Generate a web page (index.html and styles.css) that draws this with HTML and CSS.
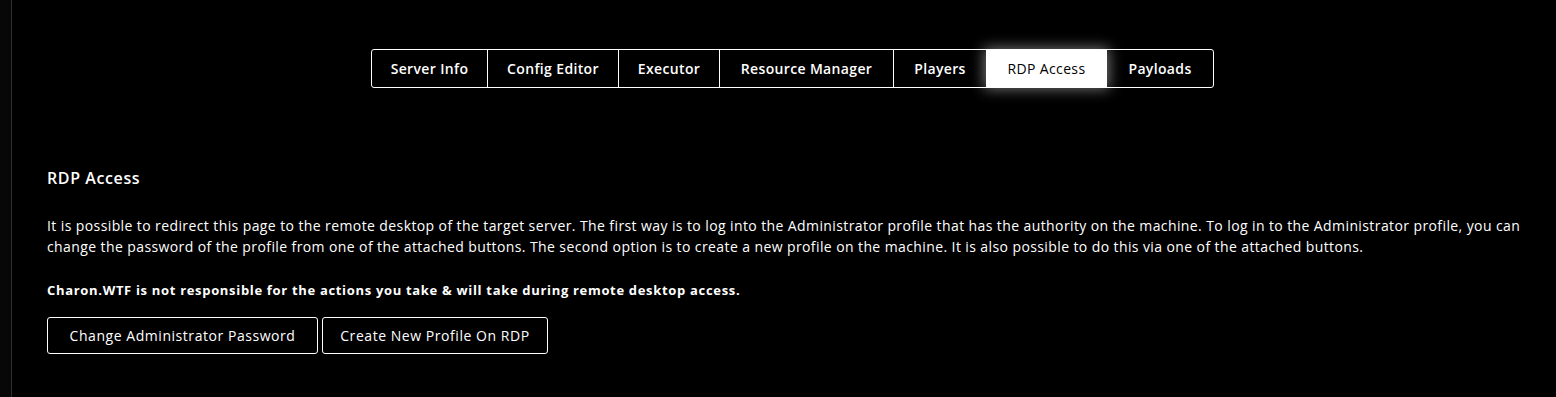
FILE: index.html
```html
<!DOCTYPE html>
<html lang="en">
<head>
<meta charset="utf-8">
<title>RDP Access</title>
<link rel="stylesheet" href="styles.css">
</head>
<body>
<div class="layout">
  <aside class="rail"></aside>
  <main class="main">
    <nav class="tabs">
      <a class="tab t-info">Server Info</a>
      <a class="tab t-config">Config Editor</a>
      <a class="tab t-exec">Executor</a>
      <a class="tab t-res">Resource Manager</a>
      <a class="tab t-players">Players</a>
      <a class="tab t-rdp active">RDP Access</a>
      <a class="tab t-payloads">Payloads</a>
    </nav>
    <section class="panel">
      <h2 class="title">RDP Access</h2>
      <p class="desc">It is possible to redirect this page to the remote desktop of the target server. The first way is to log into the Administrator profile that has the authority on the machine. To log in to the Administrator profile, you can change the password of the profile from one of the attached buttons. The second option is to create a new profile on the machine. It is also possible to do this via one of the attached buttons.</p>
      <p class="warn">Charon.WTF is not responsible for the actions you take &amp; will take during remote desktop access.</p>
      <div class="actions">
        <button class="btn btn-admin">Change Administrator Password</button>
        <button class="btn btn-profile">Create New Profile On RDP</button>
      </div>
    </section>
  </main>
</div>
</body>
</html>
```
FILE: styles.css
```css
* { box-sizing: border-box; }
html, body { margin: 0; padding: 0; background: #000; }
body {
  font-family: "Open Sans", "Liberation Sans", sans-serif;
  color: #fff;
  height: 397px;
  overflow: hidden;
}
.layout { display: flex; height: 397px; }
.rail {
  width: 12px;
  flex: none;
  background: #070707;
  border-right: 1px solid #2e2e2e;
}
.main { flex: 1; padding: 49px 0 0 17px; }
.tabs {
  display: flex;
  width: max-content;
  margin: 0 auto;
  border: 1px solid #fff;
  border-radius: 3px;
}
.tab {
  height: 37px;
  display: flex;
  align-items: center;
  justify-content: center;
  font-size: 14px;
  font-weight: 600;
  letter-spacing: 0.35px;
  border-left: 1px solid #fff;
  cursor: pointer;
}
.tab:first-child { border-left: none; }
.t-info { width: 115px; }
.t-config { width: 131px; }
.t-exec { width: 101px; }
.t-res { width: 174px; }
.t-players { width: 93px; }
.t-rdp { width: 121px; }
.t-payloads { width: 106px; }
.tab.active {
  background: #fff;
  color: #000;
  font-weight: 500;
  box-shadow: 0 0 14px 2px rgba(255,255,255,0.45);
  border-left: none;
}
.tab.active + .tab { border-left: none; }
.panel { padding: 80px 20px 0 18px; }
.title {
  margin: 0;
  font-size: 16px;
  font-weight: 600;
  letter-spacing: 0.6px;
  line-height: 20px;
}
.desc {
  margin: 27px 0 0 0;
  font-size: 14px;
  letter-spacing: 0.4px;
  line-height: 21px;
  font-weight: 400;
}
.warn {
  margin: 25px 0 0 0;
  font-size: 13px;
  font-weight: 700;
  letter-spacing: 0.68px;
  line-height: 17px;
}
.actions { display: flex; gap: 4px; margin-top: 18px; }
.btn {
  font-family: inherit;
  background: #000;
  color: #fff;
  border: 1px solid #fff;
  border-radius: 3px;
  height: 37px;
  padding: 0;
  font-size: 14px;
  font-weight: 500;
  letter-spacing: 0.55px;
}
.btn-admin { width: 271px; }
.btn-profile { width: 226px; }
```
